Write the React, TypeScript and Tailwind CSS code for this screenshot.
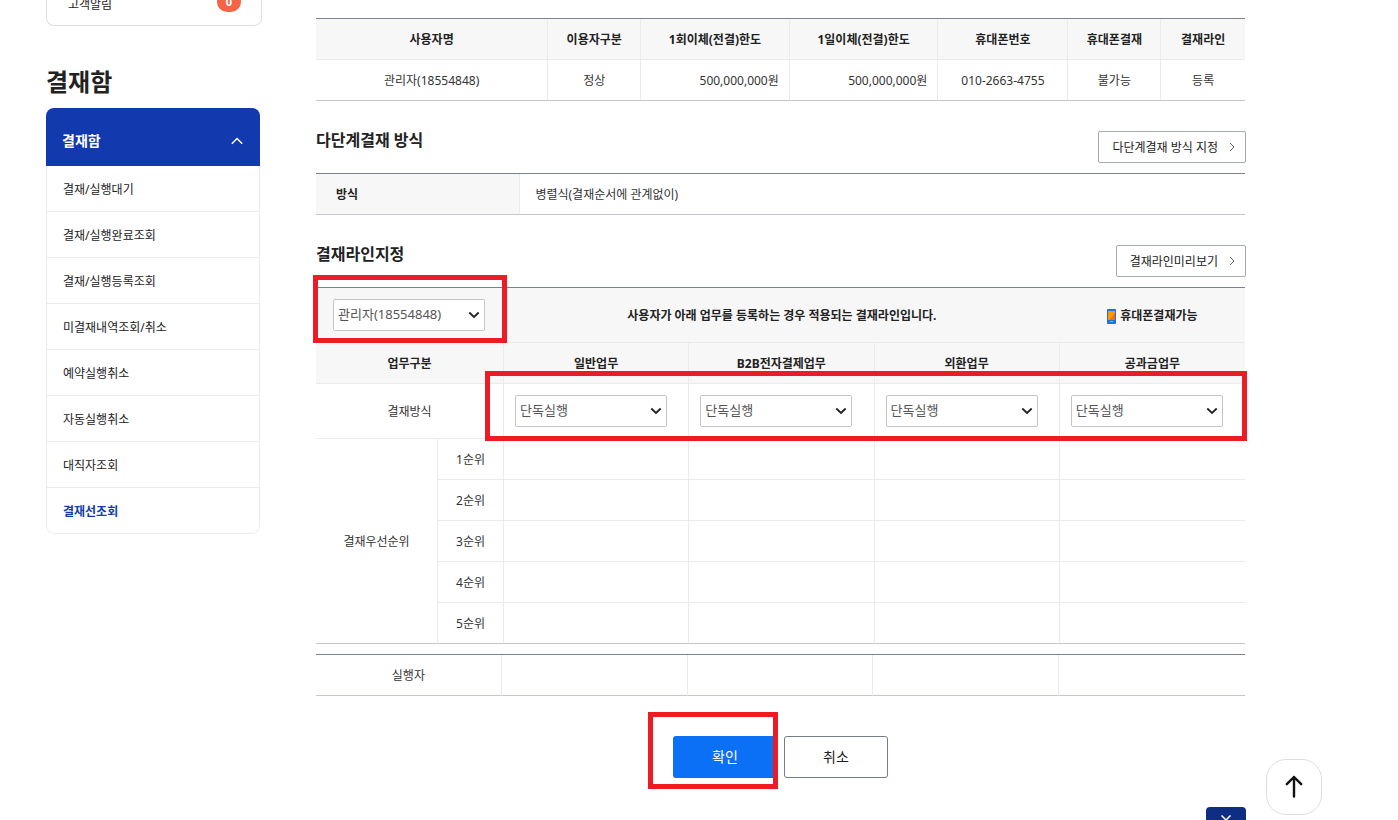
import { useState } from "react";
import type { ReactNode } from "react";

const menuItems = [
  "결재/실행대기",
  "결재/실행완료조회",
  "결재/실행등록조회",
  "미결재내역조회/취소",
  "예약실행취소",
  "자동실행취소",
  "대직자조회",
  "결재선조회",
];

const userHeaders = [
  "사용자명",
  "이용자구분",
  "1회이체(전결)한도",
  "1일이체(전결)한도",
  "휴대폰번호",
  "휴대폰결재",
  "결재라인",
];

const tasks = ["일반업무", "B2B전자결제업무", "외환업무", "공과금업무"];
const ranks = ["1순위", "2순위", "3순위", "4순위", "5순위"];

const tableClass = "w-full table-fixed border-separate border-spacing-0 border-t border-[#7b828d]";
// 마지막 열은 오른쪽 구분선이 없다
const cell = "h-[41px] border-r border-b border-[#e9ecef] pt-0.5 last:border-r-0";
const bottomCell =
  "h-[41px] border-r border-b border-r-[#e9ecef] border-b-[#c4c8cc] pt-0.5 last:border-r-0";

function Select({ label, options }: { label: string; options: string[] }) {
  const [value, setValue] = useState(options[0]);
  return (
    <div className="relative w-[152px]">
      <select
        aria-label={label}
        value={value}
        onChange={(e) => setValue(e.target.value)}
        className="block h-8 w-full appearance-none rounded-xs border border-[#c1c6cb] bg-white pr-6 pb-px pl-1 text-[13px] font-normal text-[#555]"
      >
        {options.map((o) => (
          <option key={o}>{o}</option>
        ))}
      </select>
      <svg
        className="pointer-events-none absolute top-3 right-[5px] h-2 w-3"
        viewBox="0 0 12 8"
        fill="none"
        stroke="#222"
        strokeWidth="1.8"
        aria-hidden="true"
      >
        <path d="M1.3 1.5L6 6l4.700-4.500" />
      </svg>
    </div>
  );
}

function LinkButton({ children }: { children: ReactNode }) {
  return (
    <button
      type="button"
      className="-mr-px flex h-8 items-center gap-[11px] rounded-xs border border-[#a5abb3] bg-white pr-2.5 pl-[13px] text-[#222]"
    >
      <span className="pt-0.5">{children}</span>
      <svg className="h-2.5 w-1.5" viewBox="0 0 6 10" fill="none" stroke="#666" aria-hidden="true">
        <path d="M1 1l4 4-4 4" />
      </svg>
    </button>
  );
}

function Sidebar() {
  return (
    <aside className="w-[216px] shrink-0">
      <div className="h-[26px] overflow-hidden rounded-b-lg border border-t-0 border-[#dcdfe3]">
        <a href="#alerts" className="-mt-4 flex h-9 items-center justify-between pr-5 pl-[21px]">
          <span className="pt-1.5">고객알림</span>
          <span className="flex h-5 w-6 items-center justify-center rounded-full bg-[#f46548] text-[11px] font-bold text-white">
            0
          </span>
        </a>
      </div>

      <h2 className="mt-9 text-2xl leading-10 font-bold text-[#222]">결재함</h2>

      <nav className="mt-1.5 mr-0.5 overflow-hidden rounded-lg" aria-label="결재함">
        <button
          type="button"
          className="flex h-[58px] w-full items-center justify-between bg-[#123aae] px-4 pt-2 text-sm font-bold text-white"
        >
          결재함
          <svg
            className="mr-px h-2 w-3"
            viewBox="0 0 12 8"
            fill="none"
            stroke="white"
            strokeWidth="1.5"
            aria-hidden="true"
          >
            <path d="M.8 6.800L6 1.500l5.200 5.300" />
          </svg>
        </button>
        <ul className="rounded-b-lg border-x border-b border-[#e9ecef]">
          {menuItems.map((item, i) => (
            <li key={item} className="border-[#e9ecef] not-last:border-b">
              <a
                href="#menu"
                className={
                  i === menuItems.length - 1
                    ? "flex h-[45px] items-center px-4 pt-0.5 font-bold text-[#123aae]"
                    : "flex h-[45px] items-center px-4 pt-0.5"
                }
              >
                {item}
              </a>
            </li>
          ))}
        </ul>
      </nav>
    </aside>
  );
}

function UserTable() {
  return (
    <table className={tableClass}>
      <colgroup>
        <col className="w-[25%]" />
        <col className="w-[10%]" />
        <col className="w-[16%]" />
        <col className="w-[16%]" />
        <col className="w-[14%]" />
        <col className="w-[10%]" />
        <col className="w-[9%]" />
      </colgroup>
      <thead className="bg-[#f7f7f7]">
        <tr>
          {userHeaders.map((h) => (
            <th key={h} scope="col" className={cell}>
              {h}
            </th>
          ))}
        </tr>
      </thead>
      <tbody className="text-center text-[#333]">
        <tr>
          <td className={bottomCell}>관리자(18554848)</td>
          <td className={bottomCell}>정상</td>
          <td className={`${bottomCell} pr-2.5 text-right`}>500,000,000원</td>
          <td className={`${bottomCell} pr-2.5 text-right`}>500,000,000원</td>
          <td className={bottomCell}>010-2663-4755</td>
          <td className={bottomCell}>불가능</td>
          <td className={bottomCell}>등록</td>
        </tr>
      </tbody>
    </table>
  );
}

function LineTable() {
  return (
    <table className={tableClass}>
      <colgroup>
        <col className="w-[122px]" />
        <col className="w-[66px]" />
        <col />
        <col />
        <col />
        <col />
      </colgroup>
      <thead className="bg-[#f7f7f7]">
        <tr>
          <th colSpan={2} className="h-[55px] border-b border-[#e9ecef] pl-[17px]">
            <Select label="사용자" options={["관리자(18554848)"]} />
          </th>
          <th colSpan={3} className="border-b border-[#e9ecef] pt-0.5">
            사용자가 아래 업무를 등록하는 경우 적용되는 결재라인입니다.
          </th>
          <th className="border-b border-[#e9ecef] pt-0.5">
            <span className="flex items-center justify-center gap-1">
              <svg className="h-[15px] w-[9px]" viewBox="0 0 9 15" aria-hidden="true">
                <rect width="9" height="15" rx="1" fill="#1976d2" />
                <path d="M1 2h7v9H1z" fill="#ff9800" />
                <path d="M8 4v7H2z" fill="#ff6d00" />
                <path d="M3 12.500h3" stroke="#4dd0e1" />
              </svg>
              휴대폰결재가능
            </span>
          </th>
        </tr>
        <tr>
          <th colSpan={2} scope="col" className={cell}>
            업무구분
          </th>
          {tasks.map((task) => (
            <th key={task} scope="col" className={cell}>
              {task}
            </th>
          ))}
        </tr>
      </thead>
      <tbody className="text-center text-[#333]">
        <tr>
          <td colSpan={2} className="h-[55px] border-r border-b border-[#e9ecef] pt-0.5">
            결재방식
          </td>
          {tasks.map((task) => (
            <td key={task} className="border-r border-b border-[#e9ecef] pl-[11px] last:border-r-0">
              <Select label={task} options={["단독실행", "결재후실행"]} />
            </td>
          ))}
        </tr>
        {ranks.map((rank, i) => {
          const style = i === ranks.length - 1 ? bottomCell : cell;
          return (
            <tr key={rank}>
              {i === 0 && (
                <td rowSpan={ranks.length} className={bottomCell}>
                  결재우선순위
                </td>
              )}
              <td className={style}>{rank}</td>
              {tasks.map((task) => (
                <td key={task} className={style} />
              ))}
            </tr>
          );
        })}
      </tbody>
    </table>
  );
}

export default function App() {
  return (
    <div className="flex gap-[54px] overflow-hidden bg-white pr-[153px] pl-[46px] font-['Noto_Sans','Noto_Sans_CJK_KR',sans-serif] text-xs text-[#222]">
      <Sidebar />

      <main className="min-w-0 flex-1 pt-[18px]">
        <UserTable />

        <section>
          <div className="flex h-[72px] items-start justify-between pt-[30px]">
            <h3 className="text-base leading-[18px] font-bold">다단계결재 방식</h3>
            <LinkButton>다단계결재 방식 지정</LinkButton>
          </div>
          <table className={tableClass}>
            <tbody className="text-left">
              <tr>
                <th scope="row" className={`${bottomCell} w-[22%] bg-[#f7f7f7] pl-5`}>
                  방식
                </th>
                <td className={`${bottomCell} pl-[15px] text-[#333]`}>병렬식(결재순서에 관계없이)</td>
              </tr>
            </tbody>
          </table>
        </section>

        <section>
          <div className="flex h-[72px] items-start justify-between pt-[30px]">
            <h3 className="text-base leading-[18px] font-bold">결재라인지정</h3>
            <LinkButton>결재라인미리보기</LinkButton>
          </div>
          <div className="relative">
            <LineTable />
            <div className="pointer-events-none absolute -top-3 -left-[3px] h-[68px] w-[194px] border-5 border-[#ed1c24]" />
            <div className="pointer-events-none absolute top-[84px] -right-0.5 left-[169px] h-[70px] border-5 border-[#ed1c24]" />
          </div>

          <table className={`${tableClass} mt-2.5`}>
            <tbody className="text-center text-[#333]">
              <tr>
                <td className={bottomCell}>실행자</td>
                {tasks.map((task) => (
                  <td key={task} className={bottomCell} />
                ))}
              </tr>
            </tbody>
          </table>
        </section>

        <div className="mt-10 flex justify-center gap-[7px] text-sm">
          <div className="relative">
            <button type="button" className="h-[42px] w-[104px] rounded-[3px] bg-[#0b70f6] text-white">
              확인
            </button>
            <div className="pointer-events-none absolute -top-6 -left-[25px] h-[77px] w-[130px] border-5 border-[#ed1c24]" />
          </div>
          <button type="button" className="h-[42px] w-[104px] rounded-[3px] border border-[#747e8a] bg-white">
            취소
          </button>
        </div>

        <div className="mt-[29px] -mr-px flex justify-end">
          <button
            type="button"
            aria-label="펼치기"
            className="flex h-[13px] w-10 justify-center overflow-hidden rounded-t bg-[#0f2d82] pt-2"
          >
            <svg
              className="h-2 w-3 shrink-0"
              viewBox="0 0 12 8"
              fill="none"
              stroke="white"
              strokeWidth="1.5"
              aria-hidden="true"
            >
              <path d="M1.500.5L6 5l4.500-4.500" />
            </svg>
          </button>
        </div>
      </main>

      <button
        type="button"
        aria-label="맨 위로"
        className="fixed right-[76px] bottom-[5px] flex size-14 items-center justify-center rounded-[20px] border border-[#dedede] bg-white"
      >
        <svg
          className="size-6"
          viewBox="0 0 24 24"
          fill="none"
          stroke="#111"
          strokeWidth="2.400"
          strokeLinecap="round"
          strokeLinejoin="round"
          aria-hidden="true"
        >
          <path d="M12 21.500V2M4.800 9.200L12 2l7.200 7.200" />
        </svg>
      </button>
    </div>
  );
}
